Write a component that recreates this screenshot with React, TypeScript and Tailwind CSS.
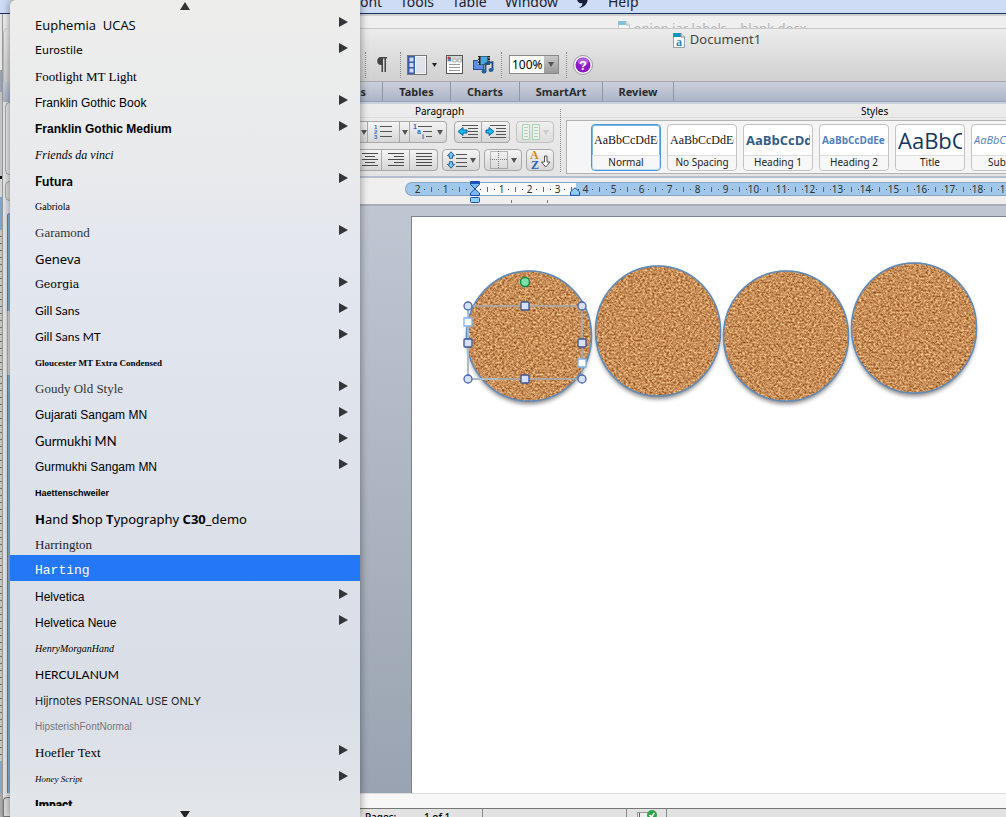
import React from "react";
import clsx from "clsx";

const fonts = [
  { name: "Euphemia  UCAS", sub: true, style: "font-['Open_Sans'] text-[13px]" },
  { name: "Eurostile", sub: true, style: "font-['DejaVu_Sans'] text-[11px]" },
  { name: "Footlight MT Light", style: "font-['Liberation_Serif'] text-[13px]" },
  { name: "Franklin Gothic Book", sub: true, style: "font-['Liberation_Sans'] text-[12px]" },
  { name: "Franklin Gothic Medium", sub: true, style: "font-['Liberation_Sans'] text-[12px] font-bold" },
  { name: "Friends da vinci", style: "font-['Liberation_Serif'] text-[12px] italic" },
  { name: "Futura", sub: true, style: "font-['Lato'] text-[13px] font-bold" },
  { name: "Gabriola", style: "font-['Liberation_Serif'] text-[10px]" },
  { name: "Garamond", sub: true, style: "font-['Liberation_Serif'] text-[13px] text-[#333]" },
  { name: "Geneva", style: "font-['Noto_Sans'] text-[13px]" },
  { name: "Georgia", sub: true, style: "font-['DejaVu_Serif'] text-[11px]" },
  { name: "Gill Sans", sub: true, style: "font-['Lato'] text-[12px]" },
  { name: "Gill Sans MT", sub: true, style: "font-['Lato'] text-[12px]" },
  { name: "Gloucester MT Extra Condensed", style: "font-['Liberation_Serif'] text-[9px] font-bold" },
  { name: "Goudy Old Style", sub: true, style: "font-['Liberation_Serif'] text-[13px] text-[#333]" },
  { name: "Gujarati Sangam MN", sub: true, style: "font-['Liberation_Sans'] text-[12px]" },
  { name: "Gurmukhi MN", sub: true, style: "font-['Lato'] text-[13px]" },
  { name: "Gurmukhi Sangam MN", sub: true, style: "font-['Liberation_Sans'] text-[12px]" },
  { name: "Haettenschweiler", style: "font-['Liberation_Sans'] text-[9px] font-bold" },
  { name: "Hand Shop Typography C30_demo", style: "font-['Noto_Sans'] text-[13px]" },
  { name: "Harrington", style: "font-['Liberation_Serif'] text-[13px] text-[#222]" },
  { name: "Harting", style: "font-['Liberation_Mono'] text-[13px]" },
  { name: "Helvetica", sub: true, style: "font-['Liberation_Sans'] text-[12px]" },
  { name: "Helvetica Neue", sub: true, style: "font-['Liberation_Sans'] text-[12px]" },
  { name: "HenryMorganHand", style: "font-['Liberation_Serif'] text-[10px] italic" },
  { name: "HERCULANUM", style: "font-['Lato'] text-[12px]" },
  { name: "Hijrnotes PERSONAL USE ONLY", style: "font-['Inter'] text-[11px] text-[#222]" },
  { name: "HipsterishFontNormal", style: "font-['Liberation_Sans'] text-[10px] text-[#777]" },
  { name: "Hoefler Text", sub: true, style: "font-['Liberation_Serif'] text-[13px]" },
  { name: "Honey Script", sub: true, style: "font-['Liberation_Serif'] text-[9px] italic" },
  { name: "Impact", style: "font-['Roboto'] text-[12px] font-black" },
];

const styles = [
  { label: "Normal", sample: "AaBbCcDdEe", look: "font-['Liberation_Serif'] text-[12px] text-[#111]", selected: true },
  { label: "No Spacing", sample: "AaBbCcDdEe", look: "font-['Liberation_Serif'] text-[12px] text-[#111]" },
  { label: "Heading 1", sample: "AaBbCcDd", look: "font-['Open_Sans'] text-[13px] font-bold text-[#345a8a]" },
  { label: "Heading 2", sample: "AaBbCcDdEe", look: "font-['Open_Sans'] text-[10px] font-bold text-[#4f81bd]" },
  { label: "Title", sample: "AaBbCc", look: "font-['Open_Sans'] text-[22px] text-[#17365d]" },
  { label: "Subtitle", sample: "AaBbCcDd", look: "font-['Open_Sans'] text-[11px] italic text-[#4f81bd]" },
];

const marks = ["2", "1", "", "1", "2", "3", "4", "5", "6", "7", "8", "9", "10", "11", "12", "13", "14", "15", "16", "17", "18", "19"];

const circles = [
  { cx: 117, cy: 118 },
  { cx: 246, cy: 113 },
  { cx: 374, cy: 118 },
  { cx: 502, cy: 110 },
];

function Caret({ faded }: { faded?: boolean }) {
  return (
    <svg width="6" height="5" viewBox="0 0 6 5" className="shrink-0">
      <path d="M0 0h6L3 5z" fill={faded ? "#bbb" : "#555"} />
    </svg>
  );
}

function Dots() {
  return <div className="h-[26px] w-0 shrink-0 border-l border-dotted border-[#8b8b8b]" />;
}

function Lines({ rows }: { rows: number[][] }) {
  return (
    <svg width="20" height="16" viewBox="0 0 20 16">
      {rows.map(([x, w], i) => (
        <rect key={i} x={x} y={i * 3 + 1} width={w} height="1" fill="#4c4c4c" />
      ))}
    </svg>
  );
}

const tool = "flex h-[22px] shrink-0 items-center justify-center border border-[#a9a9a9] bg-linear-to-b from-[#f4f4f4] to-[#d6d6d6]";

function DocIcon({ className }: { className?: string }) {
  return (
    <svg width="12" height="15" viewBox="0 0 12 15" className={className}>
      <path d="M.5.5h8l3 3v11H.5z" fill="#fff" stroke="#8aa4b0" />
      <path d="M0 0h8v4H0z" fill="#1496c0" />
      <path d="M8 0v4h4" fill="#dfe9ee" stroke="#8a8a8a" />
      <text x="3" y="13" fontFamily="Liberation Serif" fontWeight="bold" fontSize="12" fill="#2b84b8">a</text>
    </svg>
  );
}

function FontMenu() {
  return (
    <div
      role="menu"
      className="z-10 flex h-full w-[350px] shrink-0 flex-col overflow-hidden rounded-tl-md bg-[linear-gradient(#ededec,#e9eaec_20%,#e2e6ef_34%,#dce1ea_60%,#d9dee7_85%,#e3e6e9)] shadow-[0_0_8px_rgba(0,0,0,0.45)]"
    >
      <div className="flex h-[10px] shrink-0 items-end justify-center">
        <svg width="10" height="8" viewBox="0 0 10 8"><path d="M0 8h10L5 0z" fill="#333" /></svg>
      </div>
      <div className="-mt-px min-h-0 flex-1 overflow-hidden">
        {fonts.map((font) => (
          <button
            key={font.name}
            role="menuitem"
            className={clsx(
              "flex h-[26px] w-full items-center justify-between pr-3 pl-[25px] text-left",
              font.name === "Harting" ? "bg-[#2477f7] text-white" : "text-black"
            )}
          >
            <span className={clsx("pt-[6px] leading-5 whitespace-pre", font.style)}>
              {font.name.startsWith("Hand") ? (
                <><b>H</b>and <b>S</b>hop <b>T</b>ypography <b>C30</b>_demo</>
              ) : font.name}
            </span>
            {font.sub && (
              <svg width="9" height="10" viewBox="0 0 9 10"><path d="M0 0v10l9-5z" fill="#333539" /></svg>
            )}
          </button>
        ))}
      </div>
      <div className="flex h-[11px] shrink-0 items-end justify-center">
        <svg width="10" height="6" viewBox="0 0 10 6"><path d="M0 0h10L6 6H4z" fill="#222" /></svg>
      </div>
    </div>
  );
}

function BackWindows() {
  return (
    <div className="flex h-full w-[10px] shrink-0 flex-col">
      <div className="h-[14px] shrink-0 border-b border-[#1d2f5c] bg-[#cfdcf5]" />
      <div className="flex min-h-0 flex-1">
        <div className="flex w-[3px] flex-col border-r border-[#999]">
          <div className="h-[56px] bg-[#e6e6e6]" />
          <div className="h-[22px] bg-[#9aa2b2]" />
          <div className="h-[84px] bg-[#c4c4c4]" />
          <div className="h-[3px] bg-black" />
          <div className="h-[18px] bg-[#d6d6d6]" />
          <div className="h-[33px] bg-[#7fa5c8]" />
          <div className="flex-1 bg-[repeating-linear-gradient(#c4c4c2_0_6px,#77736c_6px_7px)]" />
          <div className="h-[32px] bg-[#86a9c8]" />
          <div className="h-[24px] bg-[#aaa]" />
        </div>
        <div className="flex flex-1 flex-col bg-[#e4e6e8]">
          <div className="h-[14px] bg-[#eee]" />
          <div className="h-[54px] rounded-tl-md border-l border-[#bbb] bg-linear-to-b from-[#eee] to-[#d2d2d2]" />
          <div className="h-[20px] bg-linear-to-b from-[#c8cdd9] to-[#acb4c7]" />
          <div className="ml-[2px] h-[73px] rounded-l-md border border-r-0 border-[#a4abb9] bg-[#e8e8e8]" />
          <div className="mt-[6px] ml-[2px] h-[20px] rounded-l-md border border-r-0 border-[#aaa] bg-[#ddd]" />
          <div className="mt-[12px] ml-[4px] h-[98px] rounded-tl border-l border-[#5a86aa] bg-[#8fb6d6]" />
          <div className="ml-[4px] h-[64px] border-l border-[#aaa] bg-[#ddd]" />
          <div className="ml-[4px] flex-1 border-l border-[#5a86aa] bg-[#8fb6d6]" />
          <div className="mt-[4px] h-[20px] rounded-tl border border-r-0 border-[#777] bg-[#ddd]" />
        </div>
      </div>
    </div>
  );
}

function Toolbar() {
  return (
    <div className="flex h-[27px] shrink-0 items-center pl-[5px]">
      <Dots />
      <button aria-label="Show formatting" className="ml-[10px]">
        <svg width="12" height="15" viewBox="0 0 12 15">
          <path d="M5 0h6v1.500H10V15H8.500V1.500H7V15H5.500V8A4 4 0 0 1 5 0z" fill="#444" />
        </svg>
      </button>
      <div className="ml-[12px]"><Dots /></div>
      <button aria-label="Sidebar" className="ml-[6px] flex items-center gap-[5px]">
        <svg width="20" height="20" viewBox="0 0 20 20">
          <rect x=".5" y=".5" width="19" height="19" fill="#f7f7f7" stroke="#777" />
          <rect x="1" y="1" width="7" height="18" fill="#3a5ea8" />
          <path d="M2.500 2.500h4v4h-4zM2.500 8h4v4h-4zM2.500 13.500h4v4h-4z" fill="#cddcf6" />
          <path d="M9 2h9v16H9z" fill="#dfe2ea" />
        </svg>
        <svg width="5" height="4" viewBox="0 0 5 4"><path d="M0 0h5L2.500 4z" fill="#222" /></svg>
      </button>
      <button aria-label="Toolbox" className="ml-[9px]">
        <svg width="17" height="19" viewBox="0 0 17 19">
          <rect x=".5" y=".5" width="16" height="18" fill="#fff" stroke="#555" />
          <path d="M1 1h15v6H1z" fill="#d5d5d5" />
          <path d="M2 2h3v4H2z" fill="#2e91d0" />
          <circle cx="3" cy="3" r="1.500" fill="#d33" />
          <path d="M7 4h3v3H7zM12 4h3v3h-3z" fill="#fff" stroke="#888" strokeWidth=".6" />
          <path d="M3 9.500h11M3 12.500h11M3 15.500h11" stroke="#999" />
        </svg>
      </button>
      <button aria-label="Media" className="ml-[10px]">
        <svg width="21" height="19" viewBox="0 0 21 19">
          <rect x=".5" y="5.500" width="10" height="9" fill="#5d8fe0" stroke="#2a4d91" />
          <path d="M5 1h12v9H5z" fill="#222" />
          <path d="M7.500 1.500h7v8h-7z" fill="#4aa9dc" />
          <path d="M5.500 2v8M16 2v8" stroke="#ddd" strokeDasharray="1.500 1.500" />
          <path d="M12.500 16V8.500l7-1.500v8" fill="none" stroke="#1d4d86" strokeWidth="1.800" />
          <ellipse cx="11" cy="16.500" rx="2.500" ry="2" fill="#23619e" />
          <ellipse cx="18" cy="15" rx="2.500" ry="2" fill="#23619e" />
        </svg>
      </button>
      <div className="ml-[7px]"><Dots /></div>
      <div className="ml-[7px] flex h-[19px] w-[50px] shrink-0 border border-[#888] bg-white">
        <input aria-label="Zoom" defaultValue="100%" className="w-[34px] pl-[2px] font-['Noto_Sans'] text-[12px] leading-4 text-black" />
        <button aria-label="Zoom levels" className="flex flex-1 items-center justify-center bg-linear-to-b from-[#c9c9c9] to-[#999]">
          <Caret />
        </button>
      </div>
      <div className="ml-[7px]"><Dots /></div>
      <button aria-label="Help" className="ml-[6px]">
        <svg width="20" height="20" viewBox="0 0 20 20">
          <circle cx="10" cy="10" r="9.500" fill="#f4f4f4" stroke="#999" />
          <circle cx="10" cy="10" r="7.500" fill="#8d18c4" />
          <ellipse cx="10" cy="6.500" rx="5.500" ry="3.500" fill="#b65be0" />
          <text x="10" y="14.500" textAnchor="middle" fontFamily="Liberation Sans" fontWeight="bold" fontSize="13" fill="#fff">?</text>
        </svg>
      </button>
    </div>
  );
}

function Paragraph() {
  return (
    <section className="flex w-[200px] shrink-0 flex-col">
      <h2 className="h-[13px] border-b border-[#dedede] pr-[41px] text-center text-[10px] leading-[13px] text-black">Paragraph</h2>
      <div className="mt-[3px] flex items-center">
        <button aria-label="Bullet styles" className={clsx(tool, "w-[8px] border-l-0")}><Caret /></button>
        <button aria-label="Numbered list" className={clsx(tool, "w-[32px] border-l-0")}>
          <svg width="20" height="16" viewBox="0 0 20 16">
            <g fontFamily="Liberation Sans" fontSize="6" fontWeight="bold" fill="#2d6bc8">
              <text x="0" y="5">1</text><text x="0" y="10">2</text><text x="0" y="15">3</text>
            </g>
            <path d="M6 2.500h12M6 7.500h12M6 12.500h12" stroke="#555" />
          </svg>
        </button>
        <button aria-label="Numbering styles" className={clsx(tool, "w-[10px] border-l-0")}><Caret /></button>
        <button aria-label="Multilevel list" className={clsx(tool, "w-[37px] gap-[2px] rounded-r border-l-0")}>
          <svg width="22" height="16" viewBox="0 0 22 16">
            <g fontFamily="Liberation Sans" fontSize="7" fontWeight="bold" fill="#2d6bc8">
              <text x="0" y="5">1</text><text x="4" y="10">a</text><text x="9" y="15">i</text>
            </g>
            <path d="M5 2.500h14M10 7.500h9M13 12.500h6" stroke="#555" />
          </svg>
          <Caret />
        </button>
        <button aria-label="Decrease indent" className={clsx(tool, "ml-[7px] w-[28px] rounded-l")}>
          <svg width="22" height="16" viewBox="0 0 22 16">
            <path d="M5 1.500h16M11 4.500h10M11 7.500h10M11 10.500h10M5 13.500h16" stroke="#555" />
            <path d="M1 7.500l5-4v2.500h4v3H6v2.500z" fill="#19b8ee" stroke="#0b62a0" />
          </svg>
        </button>
        <button aria-label="Increase indent" className={clsx(tool, "w-[28px] rounded-r border-l-0")}>
          <svg width="22" height="16" viewBox="0 0 22 16">
            <path d="M5 1.500h16M11 4.500h10M11 7.500h10M11 10.500h10M5 13.500h16" stroke="#555" />
            <path d="M9 7.500l-5-4v2.500H1v3h3v2.500z" fill="#19b8ee" stroke="#0b62a0" />
          </svg>
        </button>
        <button aria-label="Columns" disabled className={clsx(tool, "ml-[6px] w-[38px] gap-[3px] rounded opacity-60")}>
          <svg width="18" height="16" viewBox="0 0 18 16">
            <path d="M.5.5h7v15h-7zM10.500.5h7v15h-7z" fill="#eef8ee" stroke="#7cc48a" />
            <path d="M2 3.500h4M2 6.500h4M2 9.500h4M2 12.500h4M12 3.500h4M12 6.500h4M12 9.500h4M12 12.500h4" stroke="#9bb7a0" />
          </svg>
          <Caret faded />
        </button>
      </div>
      <div className="mt-[6px] flex items-center">
        <button aria-label="Center" className={clsx(tool, "w-[22px] border-l-0")}><Lines rows={[[1, 16], [4, 10], [1, 16], [4, 10], [1, 16]]} /></button>
        <button aria-label="Align right" className={clsx(tool, "w-[28px] border-l-0")}><Lines rows={[[2, 16], [8, 10], [2, 16], [8, 10], [2, 16]]} /></button>
        <button aria-label="Justify" className={clsx(tool, "w-[28px] rounded-r border-l-0")}><Lines rows={[[2, 16], [2, 16], [2, 16], [2, 16], [2, 16]]} /></button>
        <button aria-label="Line spacing" className={clsx(tool, "ml-[4px] w-[38px] gap-[3px] rounded")}>
          <svg width="20" height="18" viewBox="0 0 20 18">
            <path d="M4 .8l3.500 4h-2v2.500h-3V4.800h-2zM4 17.200l3.500-4h-2v-2.500h-3v2.500h-2z" fill="#7cc4f2" stroke="#2360a8" />
            <path d="M9 3.500h11M9 7.500h11M9 11.500h11M9 15.500h11" stroke="#555" />
          </svg>
          <Caret />
        </button>
        <button aria-label="Borders" className={clsx(tool, "ml-[4px] w-[38px] gap-[3px] rounded")}>
          <svg width="18" height="18" viewBox="0 0 18 18">
            <path d="M.5.5h17v17H.5zM8.500 0v18M0 8.500h18" fill="none" stroke="#777" strokeDasharray="1 1" />
          </svg>
          <Caret />
        </button>
        <button aria-label="Sort" className={clsx(tool, "ml-[4px] w-[28px] rounded")}>
          <svg width="22" height="20" viewBox="0 0 22 20">
            <g fontFamily="Liberation Serif" fontSize="12" fontWeight="bold">
              <text x="1" y="9" fill="#d98a10">A</text>
              <text x="2" y="19" fill="#2564b8">Z</text>
            </g>
            <path d="M15.500 6h2.500v6h3l-4.300 5-4.200-5h3z" fill="#fff" stroke="#555" />
          </svg>
        </button>
      </div>
    </section>
  );
}

function StyleGallery() {
  return (
    <section className="flex min-w-0 flex-1 flex-col">
      <h2 className="h-[13px] border-b border-[#dedede] pl-[300px] text-left text-[10px] leading-[13px] text-black">Styles</h2>
      <div className="mt-[2px] ml-[5px] flex h-[54px] items-center gap-[6px] overflow-hidden border border-r-0 border-[#b2b2b2] bg-[#f5f5f5] pl-[24px]">
        {styles.map((s) => (
          <button
            key={s.label}
            className={clsx(
              "flex h-[47px] w-[70px] shrink-0 flex-col overflow-hidden rounded border bg-white",
              s.selected ? "border-[#4a98dc] ring-1 ring-[#7db6e6] ring-inset" : "border-[#c2c2c2]"
            )}
          >
            <span className={clsx("flex w-full min-h-0 flex-1 items-center overflow-hidden px-[2px]", s.look)}>
              <span className="w-full overflow-hidden text-left leading-[28px] whitespace-nowrap">{s.sample}</span>
            </span>
            <span className="h-[15px] w-full border-t border-[#ddd] bg-[#f1f1f1]/60 text-center text-[10px] leading-[13px] text-[#222]">{s.label}</span>
          </button>
        ))}
      </div>
    </section>
  );
}

function Ruler() {
  return (
    <div className="h-[28px] shrink-0 overflow-hidden border-b-2 border-[#a8aeb8] bg-[#efefef] pt-[4px] pl-[45px]">
      <div className="relative h-[14px]">
        <div className="flex h-[14px] items-center overflow-hidden rounded-l-full border border-r-0 border-[#86a5c4] bg-[linear-gradient(to_right,#a1c8ea_0_70px,#fafafa_70px_170px,#a1c8ea_170px)] pl-[8px] text-[10px] text-[#333]">
          {marks.map((m, i) => (
            <div key={i} className="flex w-[28px] shrink-0 items-center">
              <span className="flex w-[7px] justify-center">{m}</span>
              <span className="flex w-[7px] justify-center"><i className="size-px bg-[#444]" /></span>
              <span className="flex w-[7px] justify-center"><i className="h-[5px] w-px bg-[#666]" /></span>
              <span className="flex w-[7px] justify-center"><i className="size-px bg-[#444]" /></span>
            </div>
          ))}
        </div>
        <svg width="10" height="22" viewBox="0 0 10 22" className="absolute -top-px left-[65px]">
          <path d="M.5.5h9v3L5 8 .5 3.500zM5 8l4.500 4v2.500h-9V12z" fill="#7ab6f0" stroke="#1d4fa5" />
          <path d="M1 1h8v2H1z" fill="#1d55c0" />
          <rect x=".5" y="16.500" width="9" height="5" rx="1" fill="#8fd0f6" stroke="#1d4fa5" />
        </svg>
        <svg width="10" height="9" viewBox="0 0 10 9" className="absolute top-[5px] left-[165px]">
          <path d="M5 .8l4.500 4v3.500h-9V4.800z" fill="#8fd0f6" stroke="#1d4fa5" />
        </svg>
      </div>
      <div className="flex gap-[35px] pt-[4px] pl-[106px]">
        <i className="h-[3px] w-px bg-[#777]" />
        <i className="h-[3px] w-px bg-[#777]" />
      </div>
    </div>
  );
}

function Page() {
  return (
    <div className="min-h-0 flex-1 overflow-hidden bg-[linear-gradient(#c0c6d2,#9aa3b1)] pt-[10px] pl-[51px]">
      <div className="h-full border-t border-l border-[#7d828c] bg-white">
        <svg width="590" height="200" viewBox="0 0 590 200" className="mt-px max-w-none overflow-visible">
          <defs>
            <filter id="cork" x="0" y="0" width="100%" height="100%" colorInterpolationFilters="sRGB">
              <feTurbulence type="fractalNoise" baseFrequency="0.42 0.5" numOctaves="4" seed="21" />
              <feColorMatrix values="0.700 0.100 0 0 0.380  0.800 0.150 0 0 0.080  0.700 0.150 0 0 -0.080  0 0 0 0 1" />
              <feComposite in2="SourceGraphic" operator="in" />
            </filter>
            <filter id="drop" x="-10%" y="-10%" width="120%" height="125%">
              <feGaussianBlur stdDeviation="2" />
            </filter>
          </defs>
          {circles.map((c) => (
            <g key={c.cx}>
              <ellipse cx={c.cx} cy={c.cy + 3} rx="62" ry="65" fill="#333" opacity=".6" filter="url(#drop)" />
              <ellipse cx={c.cx} cy={c.cy} rx="63" ry="65.500" fill="#c98b55" filter="url(#cork)" />
              <ellipse cx={c.cx} cy={c.cy} rx="62.500" ry="65" fill="none" stroke="#5b8cbd" strokeWidth="1.500" />
            </g>
          ))}
          <path d="M56 88v73h30" fill="none" stroke="#cfe3f7" strokeWidth="2" />
          <rect x="56" y="88" width="114" height="73" fill="none" stroke="#a3aeba" strokeWidth="2" strokeOpacity=".75" />
          <path d="M113.500 66v22" stroke="#9dbbe0" />
          <circle cx="113" cy="64" r="4.500" fill="#7fe0ac" stroke="#128a4b" strokeWidth="1.500" />
          {[[56, 88], [170, 88], [56, 161], [170, 161]].map(([x, y]) => (
            <circle key={`${x}-${y}`} cx={x} cy={y} r="4" fill="#d5e0f3" stroke="#4a64b0" strokeWidth="1.300" />
          ))}
          {[[113, 88], [56, 125], [170, 125], [113, 161]].map(([x, y]) => (
            <rect key={`${x}-${y}`} x={x - 4} y={y - 4} width="8" height="8" rx="1" fill="#d5e0f3" stroke="#3f538f" strokeWidth="1.300" />
          ))}
          <path d="M52 100h8v8h-8zM166 141h8v8h-8z" fill="#fff" stroke="#7fb2ec" strokeWidth="1.300" />
        </svg>
      </div>
    </div>
  );
}

export default function App() {
  return (
    <div className="flex h-screen min-h-[400px] w-full overflow-hidden bg-[#d8d8d8] font-['Noto_Sans',sans-serif]">
      <BackWindows />
      <FontMenu />
      <div className="flex h-full min-w-0 flex-1 flex-col overflow-hidden">
        <nav className="flex h-[14px] shrink-0 items-end overflow-hidden border-b border-[#1d2f5c] bg-[#cfdcf5] pb-px text-[14px] leading-5 text-[#1c2230]">
          <a href="#" className="w-[40px]">ont</a>
          <a href="#" className="w-[52px]">Tools</a>
          <a href="#" className="w-[53px]">Table</a>
          <a href="#" className="w-[71px]">Window</a>
          <svg width="12" height="14" viewBox="0 0 12 14" className="mb-[3px]">
            <path d="M1 4c3-4 8-5 10-1 2 4-2 9-8 10 3-2 4-4 3-5-2 1-5-1-5-4z" fill="#16203a" />
            <path d="M2 1l3 3M11 1l-3 3" stroke="#16203a" strokeWidth="1.500" />
          </svg>
          <a href="#" className="ml-[20px]">Help</a>
        </nav>
        <div className="flex h-[14px] shrink-0 items-start justify-center overflow-hidden border-t-2 border-[#d0d0d0] bg-[#efefef] pr-[2px] pl-[60px] text-[13px] leading-[20px] text-[#b5b5b5]">
          <DocIcon className="mt-[5px] mr-[4px] shrink-0 opacity-50" />
          <span className="pt-[2px] whitespace-nowrap">onion jar labels – blank.docx</span>
        </div>
        <header className="flex h-[54px] shrink-0 flex-col border-t border-b border-t-[#c8c8c8] border-b-[#a9a9a9] bg-linear-to-b from-[#ececec] to-[#d0d0d0]">
          <div className="flex h-[22px] shrink-0 items-center justify-center pl-[68px] text-[13px] text-[#444]">
            <DocIcon className="mr-[5px]" />
            Document1
          </div>
          <Toolbar />
        </header>
        <div className="flex h-[20px] shrink-0 border-b border-[#98a2b8] bg-linear-to-b from-[#cbd0db] to-[#acb4c7] text-[11px] leading-[20px] font-bold text-[#2c2c2c]">
          <button className="w-[23px] border-r border-[#8d95a8] pr-4 text-right">s</button>
          <button className="w-[68px] border-r border-[#8d95a8]">Tables</button>
          <button className="w-[69px] border-r border-[#8d95a8]">Charts</button>
          <button className="w-[83px] border-r border-[#8d95a8]">SmartArt</button>
          <button className="w-[71px] border-r border-[#8d95a8]">Review</button>
        </div>
        <div className="flex h-[76px] shrink-0 border-t-2 border-b-2 border-t-[#c9d1e0] border-b-[#b5bdcf] bg-linear-to-b from-[#ececec] to-[#e4e4e4] pt-px">
          <Paragraph />
          <div className="my-[4px] w-0 border-l border-dotted border-[#8b8b8b]" />
          <StyleGallery />
        </div>
        <Ruler />
        <Page />
        <div className="h-[15px] shrink-0 border-t border-[#ddd] bg-[#f7f7f7]" />
        <footer className="flex h-[9px] shrink-0 items-start overflow-hidden border-t border-[#777] bg-[#e2e2e2] text-[10px] leading-[14px] font-medium text-black">
          <span className="w-[59px] pt-px pl-[5px]">Pages:</span>
          <span className="w-[64px] border-r border-[#888] pt-px pl-[5px]">1 of 1</span>
          <span className="h-full w-[144px] border-r border-[#888]" />
          <span className="flex h-full w-[40px] justify-center border-r border-[#888] pt-px">
            <svg width="20" height="14" viewBox="0 0 20 14">
              <rect x=".5" y="2.500" width="12" height="11" fill="#eee" stroke="#999" />
              <path d="M2.500 3v10" stroke="#b33" />
              <circle cx="15" cy="5" r="5" fill="#2fa34a" />
              <path d="M12.500 5l2 2 3-4" fill="none" stroke="#fff" strokeWidth="1.500" />
            </svg>
          </span>
        </footer>
      </div>
    </div>
  );
}
